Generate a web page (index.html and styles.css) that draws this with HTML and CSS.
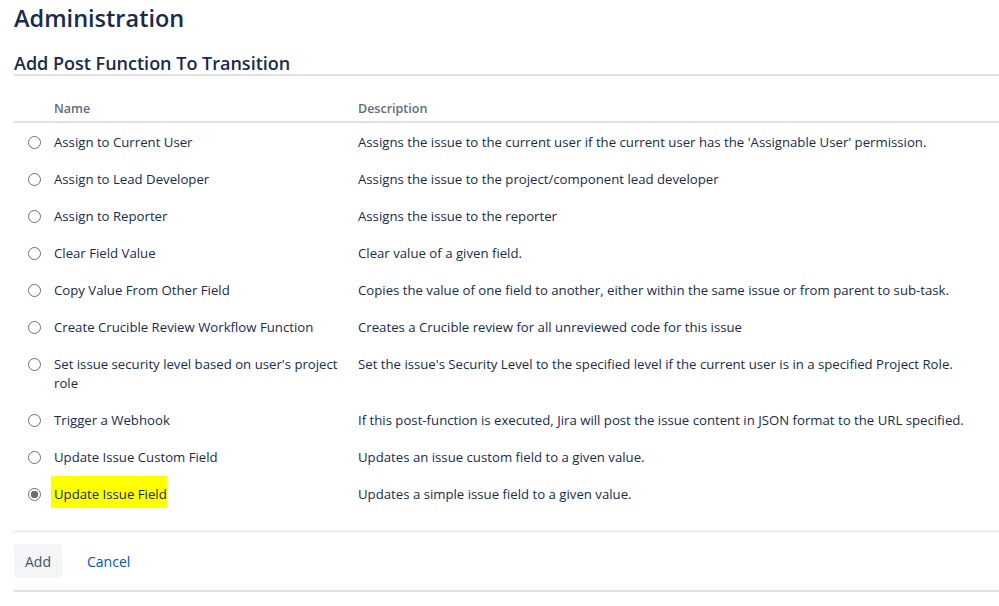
FILE: index.html
```html
<!DOCTYPE html>
<html lang="en">
<head>
<meta charset="utf-8">
<title>Administration</title>
<link rel="stylesheet" href="styles.css">
</head>
<body>
<main class="page">
  <h1 class="page-title">Administration</h1>
  <h2 class="section-title">Add Post Function To Transition</h2>
  <form class="pf-form">
    <table class="pf-table">
      <colgroup>
        <col class="c-radio">
        <col class="c-name">
        <col class="c-desc">
      </colgroup>
      <thead>
        <tr>
          <th></th>
          <th>Name</th>
          <th>Description</th>
        </tr>
      </thead>
      <tbody>
        <tr>
          <td><input class="radio" type="radio" name="pf"></td>
          <td class="col-name">Assign to Current User</td>
          <td>Assigns the issue to the current user if the current user has the 'Assignable User' permission.</td>
        </tr>
        <tr>
          <td><input class="radio" type="radio" name="pf"></td>
          <td class="col-name">Assign to Lead Developer</td>
          <td>Assigns the issue to the project/component lead developer</td>
        </tr>
        <tr>
          <td><input class="radio" type="radio" name="pf"></td>
          <td class="col-name">Assign to Reporter</td>
          <td>Assigns the issue to the reporter</td>
        </tr>
        <tr>
          <td><input class="radio" type="radio" name="pf"></td>
          <td class="col-name">Clear Field Value</td>
          <td>Clear value of a given field.</td>
        </tr>
        <tr>
          <td><input class="radio" type="radio" name="pf"></td>
          <td class="col-name">Copy Value From Other Field</td>
          <td>Copies the value of one field to another, either within the same issue or from parent to sub-task.</td>
        </tr>
        <tr>
          <td><input class="radio" type="radio" name="pf"></td>
          <td class="col-name">Create Crucible Review Workflow Function</td>
          <td>Creates a Crucible review for all unreviewed code for this issue</td>
        </tr>
        <tr>
          <td><input class="radio" type="radio" name="pf"></td>
          <td class="col-name">Set issue security level based on user's project role</td>
          <td>Set the issue's Security Level to the specified level if the current user is in a specified Project Role.</td>
        </tr>
        <tr>
          <td><input class="radio" type="radio" name="pf"></td>
          <td class="col-name">Trigger a Webhook</td>
          <td>If this post-function is executed, Jira will post the issue content in JSON format to the URL specified.</td>
        </tr>
        <tr>
          <td><input class="radio" type="radio" name="pf"></td>
          <td class="col-name">Update Issue Custom Field</td>
          <td>Updates an issue custom field to a given value.</td>
        </tr>
        <tr>
          <td><input class="radio" type="radio" name="pf" checked></td>
          <td class="col-name"><span class="highlight">Update Issue Field</span></td>
          <td>Updates a simple issue field to a given value.</td>
        </tr>
      </tbody>
    </table>
    <div class="form-actions">
      <button type="button" class="btn">Add</button>
      <a class="cancel" href="#">Cancel</a>
    </div>
  </form>
</main>
</body>
</html>
```
FILE: styles.css
```css
html, body {
  margin: 0;
  padding: 0;
  background: #ffffff;
}

body {
  font-family: "Open Sans", "Noto Sans", sans-serif;
  font-size: 13px;
  color: #172b4d;
}

.page {
  padding-left: 14px;
}

.page-title {
  margin: 0;
  padding-top: 2px;
  font-size: 23.5px;
  line-height: 32px;
  font-weight: 600;
  color: #172b4d;
}

.section-title {
  margin: 18px 0 0 0;
  font-size: 18px;
  line-height: 22px;
  font-weight: 600;
  color: #172b4d;
  padding-bottom: 0;
  border-bottom: 2px solid #dfe1e6;
}

.pf-form {
  margin-top: 23px;
}

.pf-table {
  width: 100%;
  border-collapse: collapse;
  table-layout: fixed;
}

.c-radio {
  width: 40px;
}

.c-name {
  width: 304px;
}

.pf-table th {
  text-align: left;
  font-size: 12.5px;
  font-weight: 600;
  color: #5e6c84;
  line-height: 18px;
  padding: 1px 0 3px 0;
  border-bottom: 2px solid #dfe1e6;
}

.pf-table td {
  vertical-align: top;
  font-size: 13.2px;
  line-height: 19px;
  padding: 10px 10px 8px 0;
}

.pf-table td.col-name {
  padding-right: 14px;
}

.radio {
  appearance: none;
  -webkit-appearance: none;
  display: block;
  width: 13px;
  height: 13px;
  margin: 3px 0 0 14px;
  border: 1px solid #6f6f6f;
  border-radius: 50%;
  background: #ffffff;
  box-sizing: border-box;
}

.radio:checked {
  border-color: #6f6f6f;
  background: radial-gradient(circle, #6f6f6f 0 3.5px, #ffffff 4px);
}

.highlight {
  background: #ffff00;
  padding: 9px 0 5px 3px;
  margin-left: -3px;
}

.form-actions {
  display: flex;
  align-items: center;
  gap: 25px;
  margin-top: 19px;
  padding: 12px 0 12px 0;
  border-top: 1px solid #dfe1e6;
  border-bottom: 2px solid #dfe1e6;
}

.btn {
  font-family: inherit;
  font-size: 14px;
  color: #42526e;
  background: #f4f5f7;
  border: none;
  border-radius: 3px;
  height: 34px;
  padding: 0 10px;
  width: 48px;
}

.cancel {
  font-size: 14px;
  color: #0052cc;
  text-decoration: none;
}
```
